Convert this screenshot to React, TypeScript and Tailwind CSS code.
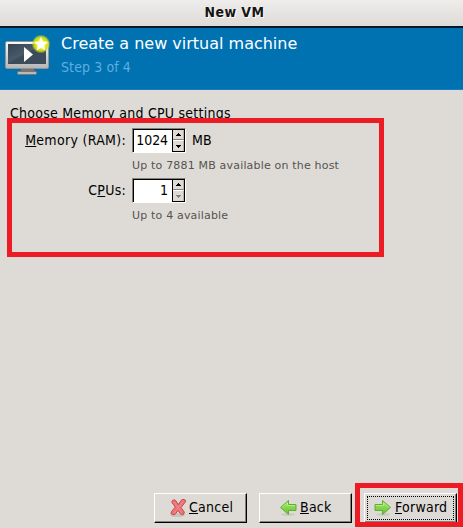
import type { ReactNode } from "react";

function Key({ children }: { children: ReactNode }) {
  return (
    <span className="underline decoration-1 underline-offset-[1px] [text-decoration-skip-ink:none]">{children}</span>
  );
}

function MonitorIcon() {
  return (
    <svg width="48" height="48" viewBox="0 0 48 48" className="block shrink-0">
      <defs>
        <linearGradient id="bezel" x1="0" y1="0" x2="0" y2="1">
          <stop offset="0" stopColor="#fafafa" />
          <stop offset="1" stopColor="#b5b5b5" />
        </linearGradient>
        <linearGradient id="screen" x1="0" y1="0" x2="1" y2="1">
          <stop offset="0" stopColor="#34444f" />
          <stop offset="0.45" stopColor="#4b5a69" />
          <stop offset="0.5" stopColor="#3c4b5a" />
          <stop offset="1" stopColor="#3e4d5c" />
        </linearGradient>
        <radialGradient id="glow">
          <stop offset="0.5" stopColor="#e8e80c" />
          <stop offset="0.75" stopColor="#d4df18" stopOpacity="0.9" />
          <stop offset="1" stopColor="#b8d820" stopOpacity="0" />
        </radialGradient>
      </defs>
      <path d="M18 34h13v4h-13z" fill="#77736f" />
      <rect x="14.5" y="36.5" width="19" height="3" rx="1" fill="#b9b9b9" stroke="#777" />
      <rect x="2.500" y="6.500" width="43" height="27" rx="1.500" fill="url(#bezel)" stroke="#96928f" />
      <rect x="5" y="9" width="38" height="20" fill="url(#screen)" />
      <path d="M21 12v15l9-7.500z" fill="#fff" />
      <circle cx="38" cy="9" r="9.500" fill="url(#glow)" />
      <path d="M38 2.500l1.900 4.200 4.600.500-3.400 3.100.9 4.600-4-2.300-4 2.300.9-4.600-3.400-3.100 4.600-.5z" fill="#fff" stroke="#fffff0" strokeWidth=".6" strokeLinejoin="round" />
    </svg>
  );
}

function ArrowIcon({ flip = false }: { flip?: boolean }) {
  return (
    <svg width="18" height="18" viewBox="0 0 18 18" className={flip ? "block -scale-x-100" : "block"}>
      <defs>
        <linearGradient id="green" x1="0" y1="0" x2="0" y2="1">
          <stop offset="0" stopColor="#a9e870" />
          <stop offset="1" stopColor="#64c22c" />
        </linearGradient>
      </defs>
      <ellipse cx="9" cy="15.500" rx="7" ry="1.500" fill="#000" opacity=".08" />
      <path d="M1 5.500h7.500v-4l8 7-8 7v-4h-7.500z" fill="url(#green)" stroke="#5fae35" strokeLinejoin="round" />
      <path d="M2 6.500h7.500v-2.700l5.300 4.700" fill="none" stroke="#c5f59a" strokeWidth=".8" opacity=".8" />
    </svg>
  );
}

function CancelIcon() {
  return (
    <svg width="17" height="20" viewBox="0 0 18 20" className="block">
      <ellipse cx="8" cy="17.500" rx="8" ry="2" fill="#000" opacity=".1" />
      <path
        d="M2.700 1.900q2.300-1.300 3.500.3l2.500 4.200 3.400-4.800q1.500-1.700 3.900-.1 1 1 .1 2.300l-4.400 5.700 3.400 4.800q.4 2.400-2 2.900-1.300.3-2.400-1.400l-2.200-3.300-2.700 3.800q-1.500 1.800-4 .2-1.300-1-.4-2.500l4.200-5-3.500-4.700q-.5-1.300.6-2.400z"
        fill="#ee7476"
        stroke="#c4454a"
      />
      <path d="M4 3.500l8.500 11.500M14 3.300l-9.500 12" stroke="#f99a9b" strokeWidth=".8" opacity=".7" />
    </svg>
  );
}

function Stepper({ disabled, up = false }: { disabled?: boolean; up?: boolean }) {
  return (
    <div
      className={
        up
          ? "flex h-[10px] items-center justify-center border-r border-b border-r-[#b5b2ad] border-b-[#85827e] bg-[#dedbd6]"
          : "flex h-[11px] items-center justify-center border-t border-r border-t-white border-r-[#b5b2ad] bg-[#dedbd6]"
      }
    >
      <svg width="5" height="3" viewBox="0 0 5 3" className="block">
        <path d={up ? "M0 3h5V2H4V1H3V0H2V1H1V2H0z" : "M0 0h5V1H4V2H3V3H2V2H1V1H0z"} fill={disabled ? "#85827e" : "#000"} />
      </svg>
    </div>
  );
}

function Spin({ value, downDisabled }: { value: string; downDisabled?: boolean }) {
  return (
    <div className="flex h-[25px] w-[54px] border border-t-[#85827e] border-l-[#85827e] border-r-white border-b-white bg-white">
      <div className="w-[39px] border-t border-l border-black pr-1 text-right leading-[21px] tracking-[-0.1px]">{value}</div>
      <div className="h-[23px] w-[13px] border border-black">
        <Stepper up />
        <Stepper disabled={downDisabled} />
      </div>
    </div>
  );
}

const button =
  "flex h-[30px] w-[93px] items-center border border-t-white border-l-white border-r-black border-b-black bg-[#dedbd6] tracking-[0.25px] shadow-[inset_-1px_-1px_0_#85827e]";

export default function App() {
  return (
    <div className="relative flex h-[528px] w-[463px] flex-col overflow-hidden bg-[#dedbd6] font-['DejaVu_Sans_Condensed','DejaVu_Sans',sans-serif] text-[14px] leading-4 tracking-[0.25px] text-black">
      <div className="h-[26px] shrink-0 bg-linear-to-b from-[#efedec] to-[#dddad7] pl-[6px] text-center font-bold leading-[25px] tracking-[0.4px] text-[#151515] [text-shadow:1px_1px_0_#fff]">
        New VM
      </div>
      <header className="flex h-16 shrink-0 border-t-2 border-b border-t-[#001a2b] border-b-[#1681c2] bg-[#0072b1] pl-[3px] pt-[7px]">
        <MonitorIcon />
        <div className="pl-[10px]">
          <div className="font-['DejaVu_Sans',sans-serif] text-base leading-[18px] tracking-normal text-white">Create a new virtual machine</div>
          <div className="pt-[6px] leading-4 tracking-[0.1px] text-[#5eaedf]">Step 3 of 4</div>
        </div>
      </header>
      <main className="flex grow flex-col">
        <div className="pl-[10px] pt-[15px]">Choose Memory and CPU settings</div>
        <div className="grid grid-cols-[126px_auto] gap-x-[6px] pt-[7px]">
          <label className="pt-1 text-right tracking-[0.3px]"><Key>M</Key>emory (RAM):</label>
          <div className="flex h-[25px] items-center gap-[6px]">
            <Spin value="1024" />
            <span className="pb-[2px]">MB</span>
          </div>
          <p className="col-start-2 h-[25px] pt-[5px] font-['DejaVu_Sans',sans-serif] text-[11px] tracking-[0.18px] text-[#555351]">Up to 7881 MB available on the host</p>
          <label className="pt-1 text-right">C<Key>P</Key>Us:</label>
          <Spin value="1" downDisabled />
          <p className="col-start-2 h-[25px] pt-[5px] font-['DejaVu_Sans',sans-serif] text-[11px] tracking-[0.18px] text-[#555351]">Up to 4 available</p>
        </div>
        <footer className="mt-auto flex gap-3 pb-[5px] pl-[154px]">
          <button className={button + " gap-[2px] pl-[15px]"}>
            <CancelIcon />
            <span className="pb-[2px]"><Key>C</Key>ancel</span>
          </button>
          <button className={button + " gap-[3px] pl-[19px]"}>
            <ArrowIcon flip />
            <span className="pb-[2px]"><Key>B</Key>ack</span>
          </button>
          <button className={button + " relative gap-[3px] pl-[9px]"}>
            <span className="absolute inset-[2px] border border-dotted border-black" />
            <ArrowIcon />
            <span className="pb-[2px]"><Key>F</Key>orward</span>
          </button>
        </footer>
      </main>
      <div className="absolute left-[7px] top-[118px] h-[139px] w-[377px] border-5 border-[#ed1c24]" />
      <div className="absolute left-[355px] top-[483px] h-[44px] w-[108px] border-5 border-[#ed1c24]" />
    </div>
  );
}
